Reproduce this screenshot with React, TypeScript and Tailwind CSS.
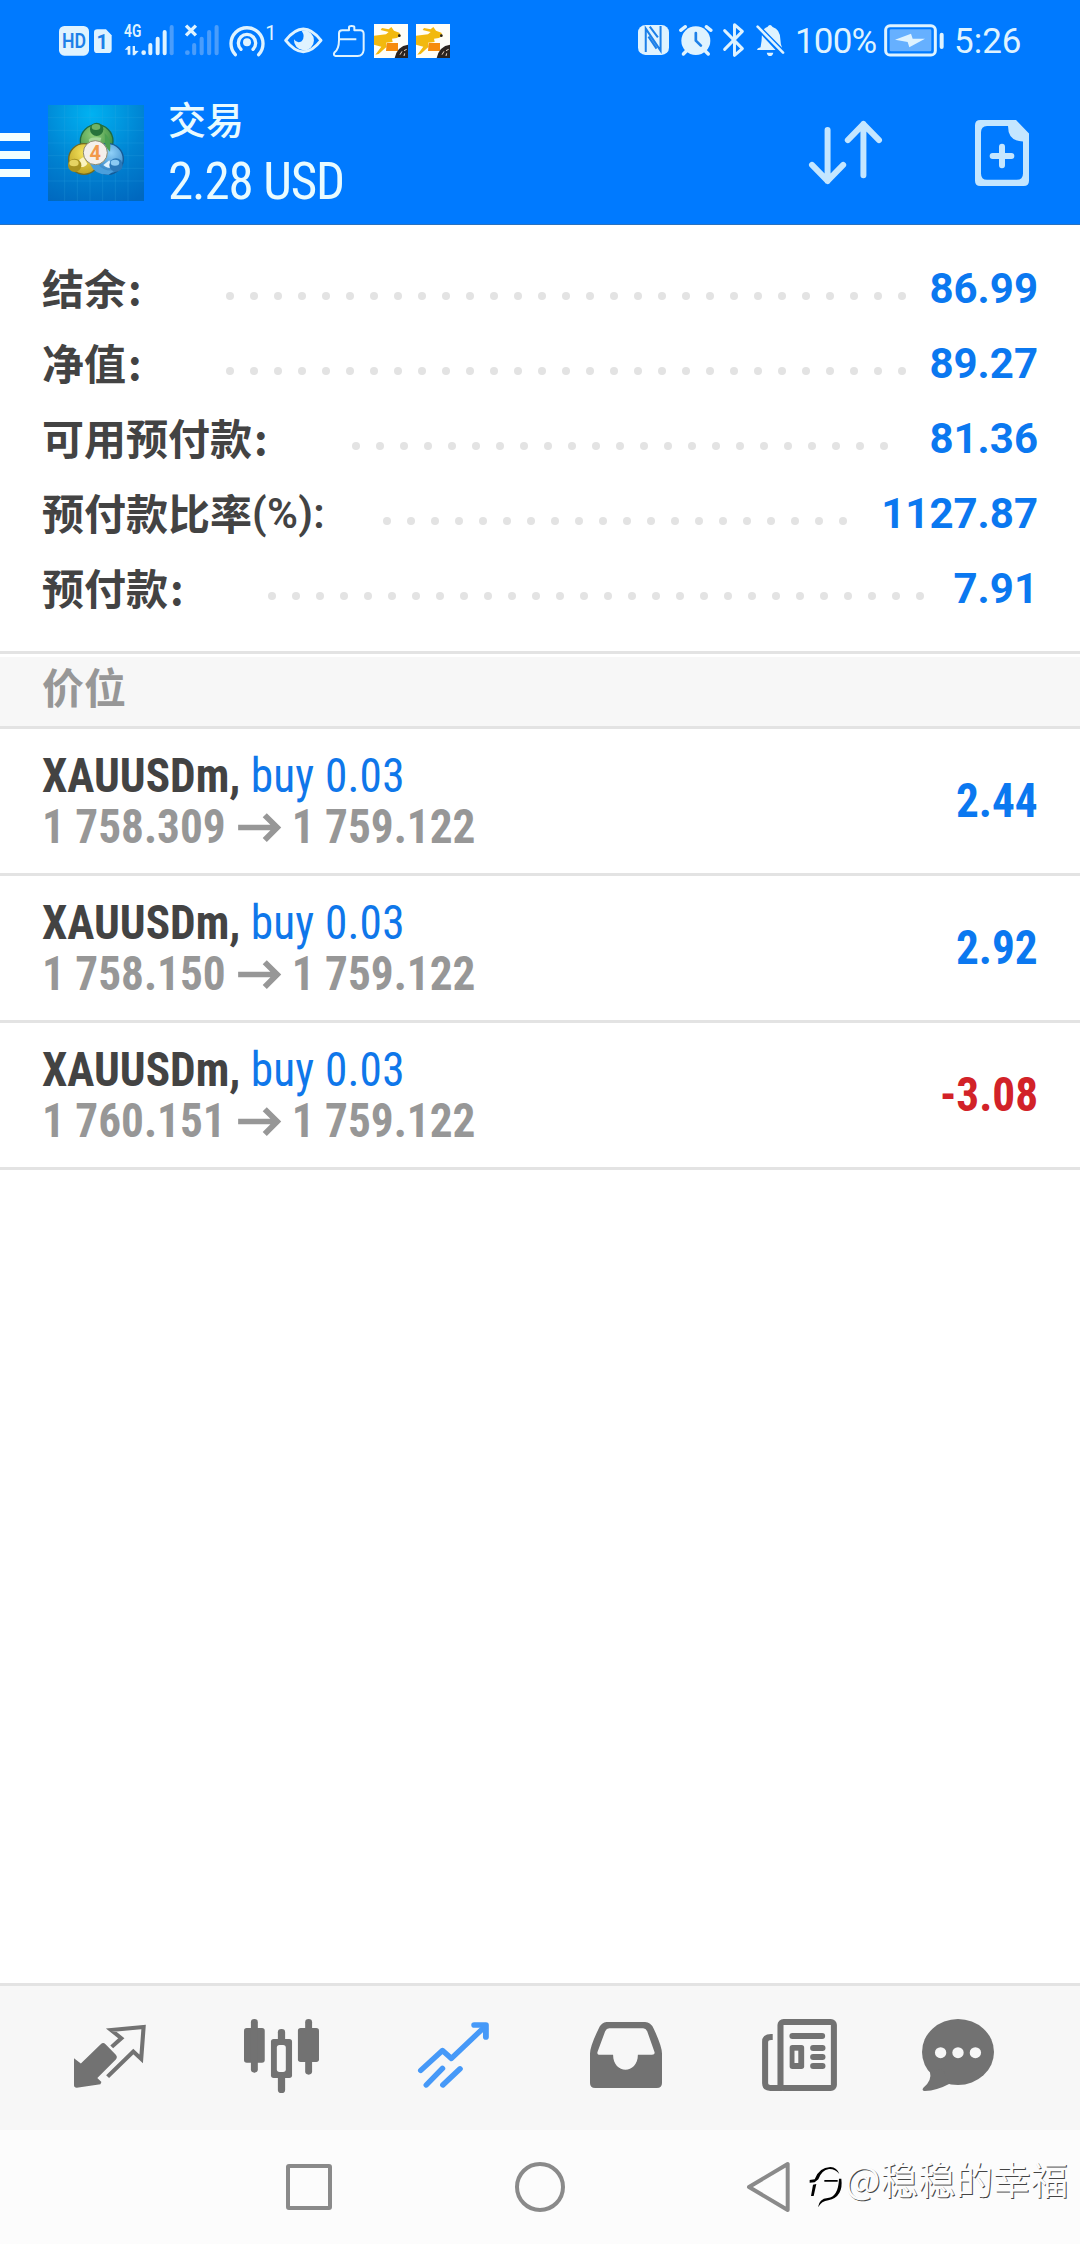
import type { ReactNode } from 'react';

type IconProps = {
  box: string;
  className: string;
  children: ReactNode;
};

const Icon = ({ box, className, children }: IconProps) => (
  <svg viewBox={box} preserveAspectRatio="none" fill="currentColor" className={`shrink-0 overflow-visible ${className}`}>
    {children}
  </svg>
);

const summary = [
  { label: '结余', tail: ':', value: '86.99', dots: 29, end: 'mr-[23px]' },
  { label: '净值', tail: ':', value: '89.27', dots: 29, end: 'mr-[23px]' },
  { label: '可用预付款', tail: ':', value: '81.36', dots: 23, end: 'mr-[41px]' },
  { label: '预付款比率', tail: '(%):', value: '1127.87', dots: 20, end: 'mr-[34px]' },
  { label: '预付款', tail: ':', value: '7.91', dots: 28, end: 'mr-[30px]' },
];

const positions = [
  { symbol: 'XAUUSDm', side: 'buy 0.03', open: '1 758.309', current: '1 759.122', profit: '2.44' },
  { symbol: 'XAUUSDm', side: 'buy 0.03', open: '1 758.150', current: '1 759.122', profit: '2.92' },
  { symbol: 'XAUUSDm', side: 'buy 0.03', open: '1 760.151', current: '1 759.122', profit: '-3.08' },
];

const JumpingDog = ({ className }: { className: string }) => (
  <Icon box="0 0 102 102" className={className}>
    <rect width="102" height="102" fill="#fffef8" />
    <path
      fill="#f2b90f"
      d="M0 35 L36 31 L44 24 L20 18 L24 12 L44 16 L52 9 L60 20 L76 26 L80 36 L68 42 L54 44 L56 54 L36 56 L38 68 L14 90 L4 92 L22 68 L0 62 Z"
    />
    <path fill="#f68b0c" d="M38 57 H72 V81 H36 Z" />
    <circle cx="76" cy="35" r="4" fill="#222" />
    <path fill="#2b2420" d="M102 62 Q70 66 62 102 H102 Z" />
    <path stroke="#e9d9c8" strokeWidth="3" fill="none" d="M78 92 L84 82 M90 80 L98 76 M90 96 L92 88" />
  </Icon>
);

const StatusBar = () => (
  <div className="flex h-20 items-start text-[#dff3ff]">
    <Icon box="57 0 90 240" className="ml-[59px] h-20 w-[30px]">
      <rect x="57" y="78" width="90" height="89" rx="16" />
      <text x="102" y="144" textAnchor="middle" textLength="72" lengthAdjust="spacingAndGlyphs" className="fill-[#1d80e8] font-['Roboto'] text-[60px] font-semibold">HD</text>
    </Icon>
    <Icon box="162 0 54 240" className="ml-[5px] h-20 w-[18px]">
      <path d="M172 88 H198 L215 106 V149 Q215 159 205 159 H172 Q162 159 162 149 V98 Q162 88 172 88Z" />
      <text x="187" y="146" textAnchor="middle" className="fill-[#1d80e8] font-['Roboto'] text-[60px] font-bold">1</text>
    </Icon>
    <Icon box="253 0 150 240" className="ml-3 h-20 w-[50px]">
      <text x="253" y="111" textLength="52" lengthAdjust="spacingAndGlyphs" className="font-['Roboto'] text-[53px] font-semibold">4G</text>
      <path d="M255 149 L266 138 H272 V164 H264 V149Z M279 138 H286 V152 L297 153 L285 166 H279Z" />
      <circle cx="312" cy="158" r="7" />
      <path stroke="currentColor" strokeWidth="12" strokeLinecap="round" d="M332 135V160M354 116V160M375 96V160" />
      <path stroke="#4a9dfb" strokeWidth="12" strokeLinecap="round" d="M396 81V160" />
    </Icon>
    <Icon box="436 0 100 240" className="ml-[11px] h-20 w-[34px]">
      <path stroke="currentColor" strokeWidth="10" d="M439 77 L468 106 M468 77 L439 106" />
      <circle cx="443" cy="158" r="7" fill="#4a9dfb" />
      <path stroke="#4a9dfb" strokeWidth="12" strokeLinecap="round" d="M463 135V160M485 116V160M507 96V160M529 81V160" />
    </Icon>
    <Icon box="568 0 141 240" className="ml-2.5 h-20 w-[47px]">
      <circle cx="622" cy="127" r="12" />
      <path fill="none" stroke="currentColor" strokeWidth="10" strokeLinecap="round" d="M587 164 A48 48 0 1 1 657 164 M604 148 A26 26 0 1 1 640 148" />
      <text x="677" y="119" className="font-['Roboto'] text-[60px]">1</text>
    </Icon>
    <Icon box="731 0 117 240" className="ml-2 h-20 w-[39px]">
      <path fill="none" stroke="currentColor" strokeWidth="9" strokeLinejoin="round" d="M736 121 Q789 53 842 121 Q789 189 736 121Z" />
      <path d="M790 91 A30 30 0 1 1 761 118 Q770 132 784 124 Q796 110 784 92Z" />
    </Icon>
    <Icon box="880 0 96 240" className="ml-2.5 h-20 w-8">
      <path fill="none" stroke="currentColor" strokeWidth="6" strokeLinejoin="round" d="M928 91 V82 Q928 78 936 78 Q944 78 944 82 V91 H962 Q972 91 972 102 V150 Q970 168 954 168 H888 Q880 166 884 158 Q898 148 898 120 V100 Q898 91 908 91Z M900 118 H950" />
    </Icon>
    <JumpingDog className="mt-6 ml-[9px] size-[34px]" />
    <JumpingDog className="mt-6 ml-2 size-[34px]" />

    <Icon box="55 0 92 240" className="ml-[188px] h-20 w-[31px]">
      <rect x="55" y="75" width="92" height="90" rx="22" />
      <path fill="none" stroke="#1d80e8" strokeWidth="6" d="M78 156 V86 L122 152 V78 M86 110 L110 146 M90 80 L114 112" />
    </Icon>
    <Icon box="178 0 101 240" className="ml-2.5 h-20 w-[34px]">
      <circle cx="228" cy="122" r="43" />
      <path fill="none" stroke="currentColor" strokeWidth="10" strokeLinecap="round" d="M183 91 L197 80 M273 91 L259 80 M191 162 L203 150 M265 162 L253 150" />
      <path fill="none" stroke="#1d80e8" strokeWidth="8" strokeLinecap="round" strokeLinejoin="round" d="M228 99 V122 L243 137" />
    </Icon>
    <Icon box="308 0 70 240" className="ml-[9px] h-20 w-[23px]">
      <path fill="none" stroke="currentColor" strokeWidth="9" strokeLinecap="round" strokeLinejoin="round" d="M316 92 L370 146 L346 166 V74 L370 94 L316 148" />
    </Icon>
    <Icon box="410 0 89 240" className="ml-[11px] h-20 w-[29px]">
      <path d="M424 142 Q428 124 428 106 L470 150 H414 Q411 146 424 142Z M434 88 Q440 82 445 81 Q453 69 461 81 Q485 88 485 120 Q485 132 490 143 Z M443 158 H463 Q461 168 453 168 Q445 168 443 158Z" />
      <path stroke="currentColor" strokeWidth="8" strokeLinecap="round" d="M415 80 L493 158" />
    </Icon>
    <span className="mt-[21px] ml-2.5 w-[84px] font-['Roboto'] text-[35px]/[42px] tracking-[-0.8px]">100%</span>
    <Icon box="791 0 180 240" className="ml-[5px] h-20 w-[60px]">
      <rect x="796" y="77" width="149" height="88" rx="13" fill="none" stroke="currentColor" strokeWidth="9" />
      <rect x="808" y="88" width="125" height="66" rx="4" fill="#66b0ff" />
      <path d="M824 119 L872 101 L877 116 H914 L867 142 L862 126Z" />
      <rect x="958" y="98" width="12" height="49" rx="6" />
    </Icon>
    <span className="mt-[21px] ml-2.5 font-['Roboto'] text-[35px]/[42px] whitespace-nowrap">5:26</span>
  </div>
);

const AppLogo = () => (
  <svg viewBox="0 0 288 288" className="ml-[18px] size-24">
    <defs>
      <radialGradient id="sky" cx="0.45" cy="0.1" r="1">
        <stop offset="0" stopColor="#00b2f2" />
        <stop offset="0.55" stopColor="#0083d2" />
        <stop offset="1" stopColor="#0068bf" />
      </radialGradient>
      <radialGradient id="leaf" cx="0.4" cy="0.3" r="0.8">
        <stop offset="0" stopColor="#8fce7a" />
        <stop offset="1" stopColor="#2c8238" />
      </radialGradient>
      <radialGradient id="gold" cx="0.5" cy="0.3" r="0.8">
        <stop offset="0" stopColor="#f6e45c" />
        <stop offset="1" stopColor="#b59a1c" />
      </radialGradient>
      <radialGradient id="sea" cx="0.6" cy="0.3" r="0.8">
        <stop offset="0" stopColor="#8fd0f8" />
        <stop offset="1" stopColor="#1b70b8" />
      </radialGradient>
    </defs>
    <rect width="288" height="288" fill="url(#sky)" />
    <path stroke="#38aee6" strokeOpacity="0.3" strokeWidth="2" d="M0 38H288M0 76H288M0 114H288M0 152H288M0 190H288M0 228H288M50 0V288M88 0V288M126 0V288M164 0V288M202 0V288M240 0V288" />
    <circle cx="146" cy="108" r="49" fill="url(#leaf)" stroke="#1f6b42" strokeWidth="4" />
    <circle cx="180" cy="162" r="46" fill="url(#sea)" stroke="#155a96" strokeWidth="4" />
    <circle cx="108" cy="162" r="46" fill="url(#gold)" stroke="#6f6a22" strokeWidth="4" />
    {/* blue petal laps over the gold one at the bottom */}
    <path d="M126 176 Q140 210 182 209 L200 196 Q166 200 150 176Z" fill="#4b9fdc" />
    <path d="M166 180 Q176 190 194 190 L184 166Z" fill="#dff2ff" />
    <path d="M92 166 L106 156 L118 176 Q112 186 100 186Z" fill="#fbf4c0" />
    <path d="M170 84 Q192 104 186 140 L172 124Z" fill="#4aa052" />
    <path d="M122 104 Q132 94 160 98 L156 112 H124Z" fill="#a5d89a" />
    <circle cx="146" cy="73" r="20" fill="#26733a" />
    <ellipse cx="144" cy="66" rx="13" ry="9" fill="#6fb266" />
    <circle cx="80" cy="181" r="20" fill="#a8921f" />
    <ellipse cx="78" cy="174" rx="14" ry="10" fill="#e6d462" />
    <circle cx="204" cy="180" r="20" fill="#2b78b8" />
    <ellipse cx="201" cy="173" rx="13" ry="9" fill="#8ccaf2" />
    <circle cx="142" cy="143" r="36" fill="#f4efea" stroke="#8a8a70" strokeWidth="3" />
    <text x="142" y="164" textAnchor="middle" className="fill-[#f2994a] font-['Roboto'] text-[60px] font-bold">4</text>
  </svg>
);

const Header = () => (
  <header className="h-[225px] border-b border-[#2a72c0] bg-[#007aff]">
    <StatusBar />
    <div className="flex h-36 text-[#e9fbff]">
      <div className="mt-[53px] flex w-[30px] flex-col gap-2.5">
        <div className="h-2 bg-[#f2ffff]" />
        <div className="h-2 bg-[#f2ffff]" />
        <div className="h-2 bg-[#f2ffff]" />
      </div>
      <div className="mt-[25px]">
        <AppLogo />
      </div>
      <div className="ml-6 flex flex-col">
        <div className="mt-3 font-['Noto_Sans_CJK_SC',sans-serif] text-[38px]/[52px] font-medium">交易</div>
        <div className="mt-2 font-['Roboto_Condensed','Roboto',sans-serif] text-[51px]/[60px] tracking-[-1.1px] [font-stretch:75%]">2.28 USD</div>
      </div>
      <Icon box="148 120 220 194" className="mt-10 ml-auto h-[65px] w-[73px] text-[#c4e6ff]">
        <path fill="none" stroke="currentColor" strokeWidth="18" strokeLinecap="round" strokeLinejoin="round" d="M204 150 V302 M157 254 L204 302 L251 254 M312 285 V132 M265 180 L312 132 L359 180" />
      </Icon>
      <Icon box="645 119 162 200" className="mt-10 mr-[51px] ml-[93px] h-[66px] w-[54px] text-[#c4e6ff]">
        <path fillRule="evenodd" d="M661 119 H768 L807 160 V303 Q807 319 791 319 H661 Q645 319 645 303 V135 Q645 119 661 119Z M681 137 Q663 138 663 156 V281 Q663 300 681 300 H770 Q789 300 789 281 V184 Q744 184 744 137Z" />
        <path stroke="currentColor" strokeWidth="18" strokeLinecap="round" d="M726 200V256M698 228H754" />
      </Icon>
    </div>
  </header>
);

const Summary = () => (
  <section className="flex h-[426px] flex-col pt-[26px]">
    {summary.map((row) => (
      <div key={row.label} className="flex h-[75px] px-[42px]">
        <div className="-mt-0.5 flex font-['Noto_Sans_CJK_SC',sans-serif] text-[42px]/[75px] font-bold text-[#434343]">
          {row.label}
          {row.tail === ':' ? (
            <span className="ml-0.5">{row.tail}</span>
          ) : (
            <span className="pt-0.5 font-['Roboto'] font-semibold tracking-[0.3px]">{row.tail}</span>
          )}
        </div>
        <div className={`mt-[41px] ml-auto flex gap-4 ${row.end}`}>
          {Array.from({ length: row.dots }, (_, i) => (
            <i key={i} className="size-2 rounded-full bg-[#e3e3e3]" />
          ))}
        </div>
        <div className="font-['Roboto'] text-[42px]/[75px] font-bold text-[#0b78f0]">{row.value}</div>
      </div>
    ))}
  </section>
);

const Positions = () => (
  <section>
    <div className="h-[78px] border-y-[3px] border-[#e3e3e3] bg-white pt-[3px]">
      <h2 className="h-full bg-[#f7f7f7] pl-[42px] font-['Noto_Sans_CJK_SC',sans-serif] text-[42px]/[57px] font-bold text-[#979797]">
        价位
      </h2>
    </div>
    {positions.map((p) => (
      <div
        key={p.open}
        className="flex h-[147px] items-center justify-between border-b-[3px] border-[#e3e3e3] px-[42px] font-['Roboto_Condensed','Roboto',sans-serif] text-[48px] font-bold [font-stretch:75%]"
      >
        <div className="origin-left scale-x-[0.943]">
          <div className="leading-[51px] text-[#434343]">
            {p.symbol}, <span className="font-normal tracking-[0.2px] text-[#0f77ea]">{p.side}</span>
          </div>
          <div className="flex items-center leading-[51px] text-[#979797]">
            {p.open}
            <Icon box="714 518 126 88" className="mt-0.5 mr-3 ml-[13px] h-[29px] w-[45px]">
              <path fill="none" stroke="currentColor" strokeWidth="17" d="M714 562H830M793 525L830 562L793 600" />
            </Icon>
            {p.current}
          </div>
        </div>
        <div className={`origin-right scale-x-[0.943] ${p.profit.startsWith('-') ? 'text-[#d22228]' : 'text-[#0b78f0]'}`}>
          {p.profit}
        </div>
      </div>
    ))}
  </section>
);

const TabBar = () => (
  <nav className="mt-auto flex h-[147px] border-t-[3px] border-[#e3e3e3] bg-[#f7f7f7] text-[#727272]">
    {/* Quotes */}
    <Icon box="0 0 210 190" className="mt-[39px] ml-[74px] h-[63px] w-[72px]">
      <path d="M0 100 L20 116 L78 58 Q85 51 92 58 L122 90 Q128 97 122 104 L68 160 L80 172 L77 179 L8 189 Q0 189 0 182Z" />
      <path fill="none" stroke="currentColor" strokeWidth="12" d="M110 66 L138 40 L108 15 L203 6 L196 102 L173 80 L98 156" />
    </Icon>
    {/* Charts */}
    <Icon box="0 0 217 222" className="mt-[33px] ml-[98px] h-[74px] w-[75px]">
      <rect y="27" width="60" height="104" rx="8" />
      <rect x="20" width="20" height="161" rx="10" />
      <rect x="156" y="27" width="61" height="102" rx="8" />
      <rect x="177" width="20" height="167" rx="10" />
      <rect x="98" y="30" width="21" height="60" rx="10" />
      <rect x="98" y="160" width="21" height="62" rx="10" />
      <rect x="78" y="60" width="61" height="117" rx="8" />
      <rect x="95" y="78" width="26" height="81" rx="8" fill="#f7f7f7" />
    </Icon>
    {/* Trade */}
    <Icon box="0 0 206 199" className="mt-9 ml-[99px] h-[66px] w-[71px] text-[#4699f8]">
      <path fill="none" stroke="currentColor" strokeWidth="16" strokeLinecap="round" strokeLinejoin="round" d="M8 146 L71 86 L97 110 L194 14 M24 190 L71 140 M72 190 L122 141" />
      <path fill="none" stroke="currentColor" strokeWidth="17" strokeLinecap="round" strokeLinejoin="round" d="M163 9 H197 V45" />
    </Icon>
    {/* History */}
    <Icon box="0 0 209 199" className="mt-9 ml-[101px] h-[66px] w-[72px]">
      <path fillRule="evenodd" d="M48 0 H160 Q176 0 185 20 Q209 74 209 95 V184 Q209 199 194 199 H15 Q0 199 0 184 V95 Q0 74 25 20 Q34 0 48 0Z M56 19 Q48 19 44 28 L22 90 Q19 99 30 99 H67 C67 159 139 159 139 99 H180 Q190 99 187 90 L166 28 Q162 19 154 19Z" />
    </Icon>
    {/* News */}
    <Icon box="0 0 217 216" className="mt-[33px] ml-[100px] h-[72px] w-[75px]">
      <rect x="53.5" y="9" width="154.500" height="198" rx="9" fill="none" stroke="currentColor" strokeWidth="17.500" />
      <path fill="none" stroke="currentColor" strokeWidth="17.500" d="M31 54 H26 Q9 54 9 68 V193 Q9 207 24 207 H60" />
      <path stroke="currentColor" strokeWidth="17.500" strokeLinecap="round" d="M88 51H174M148 87H175M148 114H175M148 141H175" />
      <rect x="80" y="78" width="42" height="72" rx="8" />
      <rect x="94" y="95" width="11" height="37" fill="#f7f7f7" />
    </Icon>
    {/* Mailbox */}
    <Icon box="0 0 209 216" className="mt-[33px] ml-[85px] h-[72px] w-[72px]">
      <ellipse cx="104.500" cy="99" rx="104.500" ry="99" />
      <path d="M23 158 Q30 184 4 206 Q-2 214 8 216 Q44 214 80 194 L60 150Z" />
      <g fill="#f7f7f7">
        <circle cx="54" cy="101" r="16.500" />
        <circle cx="104.500" cy="101" r="16.500" />
        <circle cx="155" cy="101" r="16.500" />
      </g>
    </Icon>
  </nav>
);

const SystemBar = () => (
  <div className="flex h-[114px] bg-[#fcfcfc] text-[#8a8a8a]">
    <div className="mt-[34px] ml-[286px] size-[46px] rounded-[3px] border-4 border-current" />
    <div className="mt-8 ml-[183px] size-[50px] rounded-full border-4 border-current" />
    <Icon box="141 96 130 150" className="mt-8 ml-[182px] h-[50px] w-[43px]">
      <path fill="none" stroke="currentColor" strokeWidth="12" strokeLinejoin="round" d="M264 102 V240 L147 171Z" />
    </Icon>
    <Icon box="328 108 102 126" className="mt-9 ml-[19px] h-[42px] w-[34px] text-black">
      <path d="M330 150 L345 148 Q358 112 392 111 Q412 112 419 132 Q406 116 388 117 Q366 120 356 148 L345 157 L330 158Z M340 164 L350 162 L342 198 L334 198Z M374 150 H414 V155 H374Z M418 146 H425 Q432 200 386 211 Q366 213 355 232 Q358 206 384 204 Q416 200 418 146Z" />
    </Icon>
    <span className="mt-[23px] ml-0.5 font-['Noto_Sans_CJK_SC',sans-serif] text-[37.500px]/[50px] whitespace-nowrap text-[#fcfcfc] [text-shadow:1px_1px_0_#444]">
      @稳稳的幸福
    </span>
  </div>
);

export default function App() {
  return (
    <div className="flex h-[2244px] w-[1080px] flex-col overflow-hidden bg-white">
      <Header />
      <Summary />
      <Positions />
      <TabBar />
      <SystemBar />
    </div>
  );
}
